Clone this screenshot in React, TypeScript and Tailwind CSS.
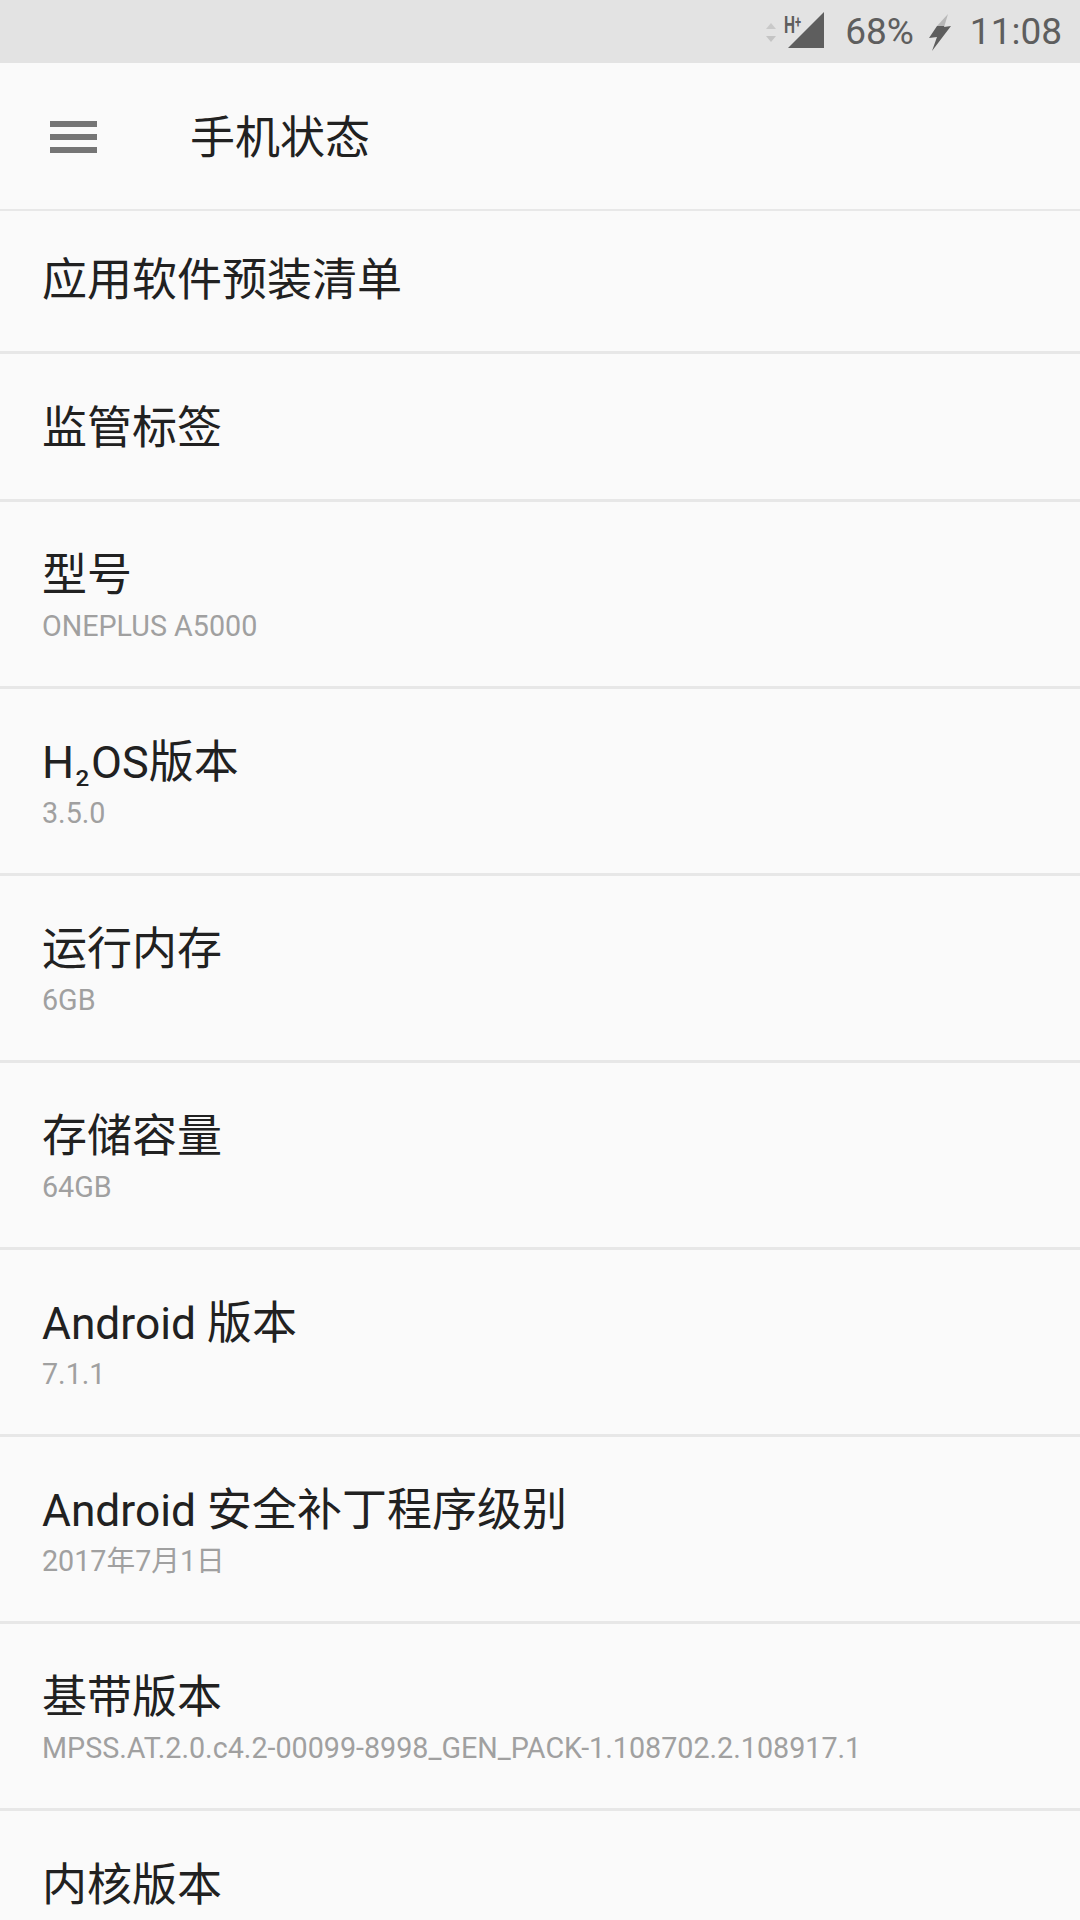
import React from "react";

type Row = {
  title: React.ReactNode;
  sub?: string;
  first?: boolean;
};

const rows: Row[] = [
  { title: "应用软件预装清单", first: true },
  { title: "监管标签" },
  { title: "型号", sub: "ONEPLUS A5000" },
  {
    title: (
      <>
        H
        <span className="inline-block w-[15px] ml-[1px] mr-[1px] text-center text-[22px] font-medium leading-none align-[-8px] scale-x-110">
          2
        </span>
        OS版本
      </>
    ),
    sub: "3.5.0",
  },
  { title: "运行内存", sub: "6GB" },
  { title: "存储容量", sub: "64GB" },
  {
    title: (
      <>
        <span className="text-[44.3px]">Android </span>版本
      </>
    ),
    sub: "7.1.1",
  },
  {
    title: (
      <>
        <span className="text-[44.3px]">Android </span>安全补丁程序级别
      </>
    ),
    sub: "2017年7月1日",
  },
  { title: "基带版本", sub: "MPSS.AT.2.0.c4.2-00099-8998_GEN_PACK-1.108702.2.108917.1" },
  { title: "内核版本" },
];

function StatusBar() {
  return (
    <div className="h-[63px] bg-[#e3e3e3] flex items-center justify-end pr-[18px] text-[#5e5e5e]">
      <svg width="10" height="19" viewBox="0 0 10 19" className="mr-[8px] mt-[2px]">
        <path d="M5 0l5 6H0z" fill="#c9c9c9" />
        <path d="M5 19l5-6H0z" fill="#c4c4c4" />
      </svg>
      <div className="relative w-[40px] h-[36px] mt-[-3px]">
        <svg width="36" height="36" viewBox="0 0 36 36" className="absolute right-0 top-0">
          <path d="M36 0v36H0z" fill="#5e5e5e" />
        </svg>
        <span className="absolute left-0 top-[-2px] text-[24px] leading-[24px] font-bold scale-x-[0.65] origin-left">
          H<span className="text-[17px] align-[5px]">+</span>
        </span>
      </div>
      <span className="ml-[21px] text-[37px] leading-none">68%</span>
      <svg width="22" height="38" viewBox="0 0 22 38" className="ml-[15px] mr-[19px]">
        <path d="M8 13 L0 25 L8 24 L3 38 L22 13 L15 14 L15.4 13 Z" fill="#5e5e5e" />
        <path d="M19 1 L8 13 L15.4 13 Z" fill="#b8b8b8" />
      </svg>
      <span className="text-[37px] leading-none">11:08</span>
    </div>
  );
}

function ListRow({ row }: { row: Row }) {
  return (
    <div
      className={`px-[42px] border-b-[3px] border-[#e7e7e7] flex flex-col justify-center ${
        row.sub ? "h-[187px] pt-[5px]" : row.first ? "h-[143px]" : "h-[148px] pt-[5px]"
      }`}
    >
      <div className="text-[45px] leading-[56px] text-[#212121]">{row.title}</div>
      {row.sub && <div className="mt-[3px] text-[28.7px] leading-[38px] text-[#a0a0a0]">{row.sub}</div>}
    </div>
  );
}

export default function App() {
  return (
    <div
      className="w-[1080px] h-[1920px] overflow-hidden bg-[#fafafa]"
      style={{ fontFamily: 'Roboto, "Noto Sans CJK SC", sans-serif' }}
    >
      <StatusBar />
      <div className="h-[148px] flex items-center border-b-2 border-[#e8e8e8]">
        <div className="ml-[50px] mt-[1px] w-[47px] flex flex-col gap-[7px]">
          <div className="h-[6px] bg-[#757575]" />
          <div className="h-[6px] bg-[#757575]" />
          <div className="h-[6px] bg-[#757575]" />
        </div>
        <div className="ml-[93px] mt-[4px] text-[45px] text-[#212121] leading-none">手机状态</div>
      </div>
      {rows.map((row, i) => (
        <ListRow key={i} row={row} />
      ))}
    </div>
  );
}
